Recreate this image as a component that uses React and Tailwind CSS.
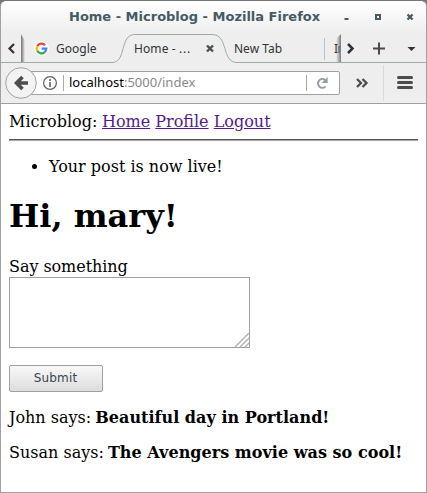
const GoogleLogo = () => (
  <svg width="15" height="15" viewBox="0 0 15 15" className="shrink-0">
    <circle cx="7.5" cy="7.5" r="7.5" fill="#fff" />
    <g fill="none" strokeWidth="2.3">
      <path d="M3.25 5.2A4.8 4.8 0 0 1 11 4.1" stroke="#ea4335" />
      <path d="M3.25 9.8A4.8 4.8 0 0 1 3.25 5.2" stroke="#fbbc05" />
      <path d="M10.7 11.1A4.8 4.8 0 0 1 3.25 9.8" stroke="#34a853" />
      <path d="M7.6 7.6H12.3A4.8 4.8 0 0 1 10.7 11.1" stroke="#4285f4" />
    </g>
  </svg>
);

const TitleBar = () => (
  <header className="flex h-[33px] shrink-0 items-center pb-px pl-[68px] font-['DejaVu_Sans',sans-serif] text-[13px] font-bold text-[#455a64]">
    <span className="w-[265px] whitespace-nowrap">Home - Microblog - Mozilla Firefox</span>
    <svg width="86" height="16" viewBox="0 0 86 16" fill="none" stroke="#455a64">
      <path d="M10.5 10h4" strokeWidth="2" />
      <path d="M42 6h4v4h-4z" strokeWidth="2" />
      <path d="m73.5 5.5 5 5m0-5-5 5" strokeWidth="2.3" />
    </svg>
  </header>
);

const TabStrip = () => (
  <div className="relative flex h-[29px] shrink-0 items-center font-['Noto_Sans',sans-serif] text-[12px] text-[#2e3436]">
    <svg className="absolute left-0 top-0" width="425" height="29" viewBox="0 0 425 29" fill="none">
      <defs>
        <linearGradient id="edgeL">
          <stop stopColor="#777" />
          <stop offset=".35" stopColor="#999" />
          <stop offset="1" stopColor="#999" stopOpacity="0" />
        </linearGradient>
        <linearGradient id="edgeR">
          <stop stopColor="#888" stopOpacity="0" />
          <stop offset="1" stopColor="#777" />
        </linearGradient>
      </defs>
      <path d="M0 28.5H111C126 28.5 118 .5 134 .5H211C228 .5 220 28.5 236 28.5H425" stroke="#a0a8ac" />
      <path d="M323.5 4V26" stroke="#c0c0c0" />
      <path d="M20 0 24 7V28H20z" fill="url(#edgeL)" />
      <path d="m13 10-4.5 4.5L13 19" stroke="#2e3436" strokeWidth="2.2" />
      <path d="m206 11.5 6 6m0-6-6 6" stroke="#4a5052" strokeWidth="2.4" />
    </svg>
    <div className="relative flex w-[133px] items-center gap-[7px] pl-[33px]">
      <GoogleLogo />
      <span>Google</span>
    </div>
    <span className="relative w-[100px] tracking-[0.1px]">
      Home - <span className="tracking-[0.8px]">...</span>
    </span>
    <span className="relative w-[100px]">New Tab</span>
    <span className="relative w-[7px] whitespace-nowrap tracking-[-0.5px]">In</span>
    <svg className="absolute left-[332px] top-0" width="93" height="29" viewBox="0 0 93 29" fill="none">
      <path d="M3 5 8 0V28H3z" fill="url(#edgeR)" />
      <path d="M8 0h6v28H8z" fill="#eee" />
      <path d="m15 10 4.5 4.5L15 19" stroke="#2e3436" strokeWidth="2.5" />
      <path d="M40 14.5h12m-6-6v12" stroke="#4a4a4a" strokeWidth="2" />
      <path d="M74.500 13h8l-4 4z" fill="#2e3436" />
    </svg>
  </div>
);

const NavBar = () => (
  <div className="flex h-[41px] shrink-0 items-center border-b border-[#a0a0a0] bg-[#eeeeee] pl-1">
    <svg className="relative z-10 shrink-0" width="32" height="32" viewBox="0 0 32 32" fill="none">
      <circle cx="16" cy="16" r="15.3" fill="#f3f3f3" stroke="#a0a0a0" />
      <path d="M23 16H12M17.500 10 11.500 16l6 6" stroke="#4c4c4c" strokeWidth="3.6" />
    </svg>
    <div className="-ml-2 flex h-6 w-[311px] items-center rounded-r-[2px] border border-[#a0a0a0] bg-white pl-[12px] font-['Noto_Sans',sans-serif] text-[13px] text-[#888]">
      <svg width="24" height="16" viewBox="0 0 24 16" fill="none" className="shrink-0">
        <circle cx="8" cy="8" r="6.4" stroke="#606060" strokeWidth="1.2" />
        <path d="M8 4v2m0 1v5" stroke="#606060" strokeWidth="1.6" />
        <path d="M21.5 0v16" stroke="#aaa" />
      </svg>
      <span className="ml-[3px] grow"><span className="text-black">localhost</span>:5000/index</span>
      <svg width="34" height="16" viewBox="0 0 34 16" fill="none" className="shrink-0">
        <path d="M1.5 0v16" stroke="#a0a8ae" />
        <path d="M20.6 11.4A4.4 4.4 0 1 1 20 4.8" stroke="#8f9da8" strokeWidth="2" />
        <path d="M22.6 2v6h-6z" fill="#8f9da8" />
      </svg>
    </div>
    <svg width="85" height="40" viewBox="0 0 85 40" fill="none">
      <path d="m17 16 4 4-4 4m5.500-8 4 4-4 4" stroke="#4c4c4c" strokeWidth="2.3" />
      <path d="M43.5 2v36" stroke="#dadada" />
      <path d="M58.5 14.5h13m-13 5h13m-13 5h13" stroke="#4c4c4c" strokeWidth="3" strokeLinecap="round" />
    </svg>
  </div>
);

const links = ["Home", "Profile", "Logout"];
const posts = [
  ["John", "Beautiful day in Portland!"],
  ["Susan", "The Avengers movie was so cool!"],
];

export default function App() {
  return (
    <div className="h-[493px] w-[427px] bg-[#777]">
      <div className="flex h-full flex-col overflow-hidden rounded-t-[6px] border border-t-[#777] border-[#a0a0a0] bg-[linear-gradient(#fff,#eeeeee_33px,#eeeeee)]">
        <TitleBar />
        <TabStrip />
        <NavBar />
        <main className="grow bg-white p-2 font-['DejaVu_Serif',serif] text-[16px] leading-[19px] text-black">
          <div>
            <span className="-mr-[0.5px]">Microblog: </span>
            {links.map((l) => (
              <span key={l}>
                <a href="#" className="text-[#551a8b] underline">{l}</a>{" "}
              </span>
            ))}
          </div>
          <hr className="my-2 h-[2px] border-t border-b border-t-[#555] border-b-[#aaa]" />
          <ul className="mt-4 list-disc pl-10">
            <li>Your post is now live!</li>
          </ul>
          <h1 className="mt-[21px] mb-[22px] text-[32px] font-bold leading-[38px]">Hi, mary!</h1>
          <form>
            <label htmlFor="post" className="block tracking-[-0.06px]">Say something</label>
            <div className="relative mt-px h-[71px] w-[241px]">
              <textarea id="post" className="block h-full w-full resize-none border border-[#a0a0a0] bg-white outline-none" />
              <svg className="absolute bottom-px right-px" width="14" height="14" viewBox="0 0 14 14" stroke="#b4b4b4" strokeWidth="1.5">
                <path d="M0 14 14 0M5 14l9-9M10 14l4-4" />
              </svg>
            </div>
            <button type="button" className="mt-[17px] block h-[27px] w-[94px] rounded-[2px] border border-[#a0a0a0] bg-gradient-to-b from-[#f8f8f8] to-[#dddddd] pb-px pr-px font-['DejaVu_Sans',sans-serif] text-[12px] leading-none tracking-[0.15px] text-[#37474f]">
              Submit
            </button>
          </form>
          {posts.map(([name, text]) => (
            <p key={name} className="mt-4">
              <span className="-mr-px">{name} says: </span>
              <b className="tracking-[0.03px]">{text}</b>
            </p>
          ))}
        </main>
      </div>
    </div>
  );
}
